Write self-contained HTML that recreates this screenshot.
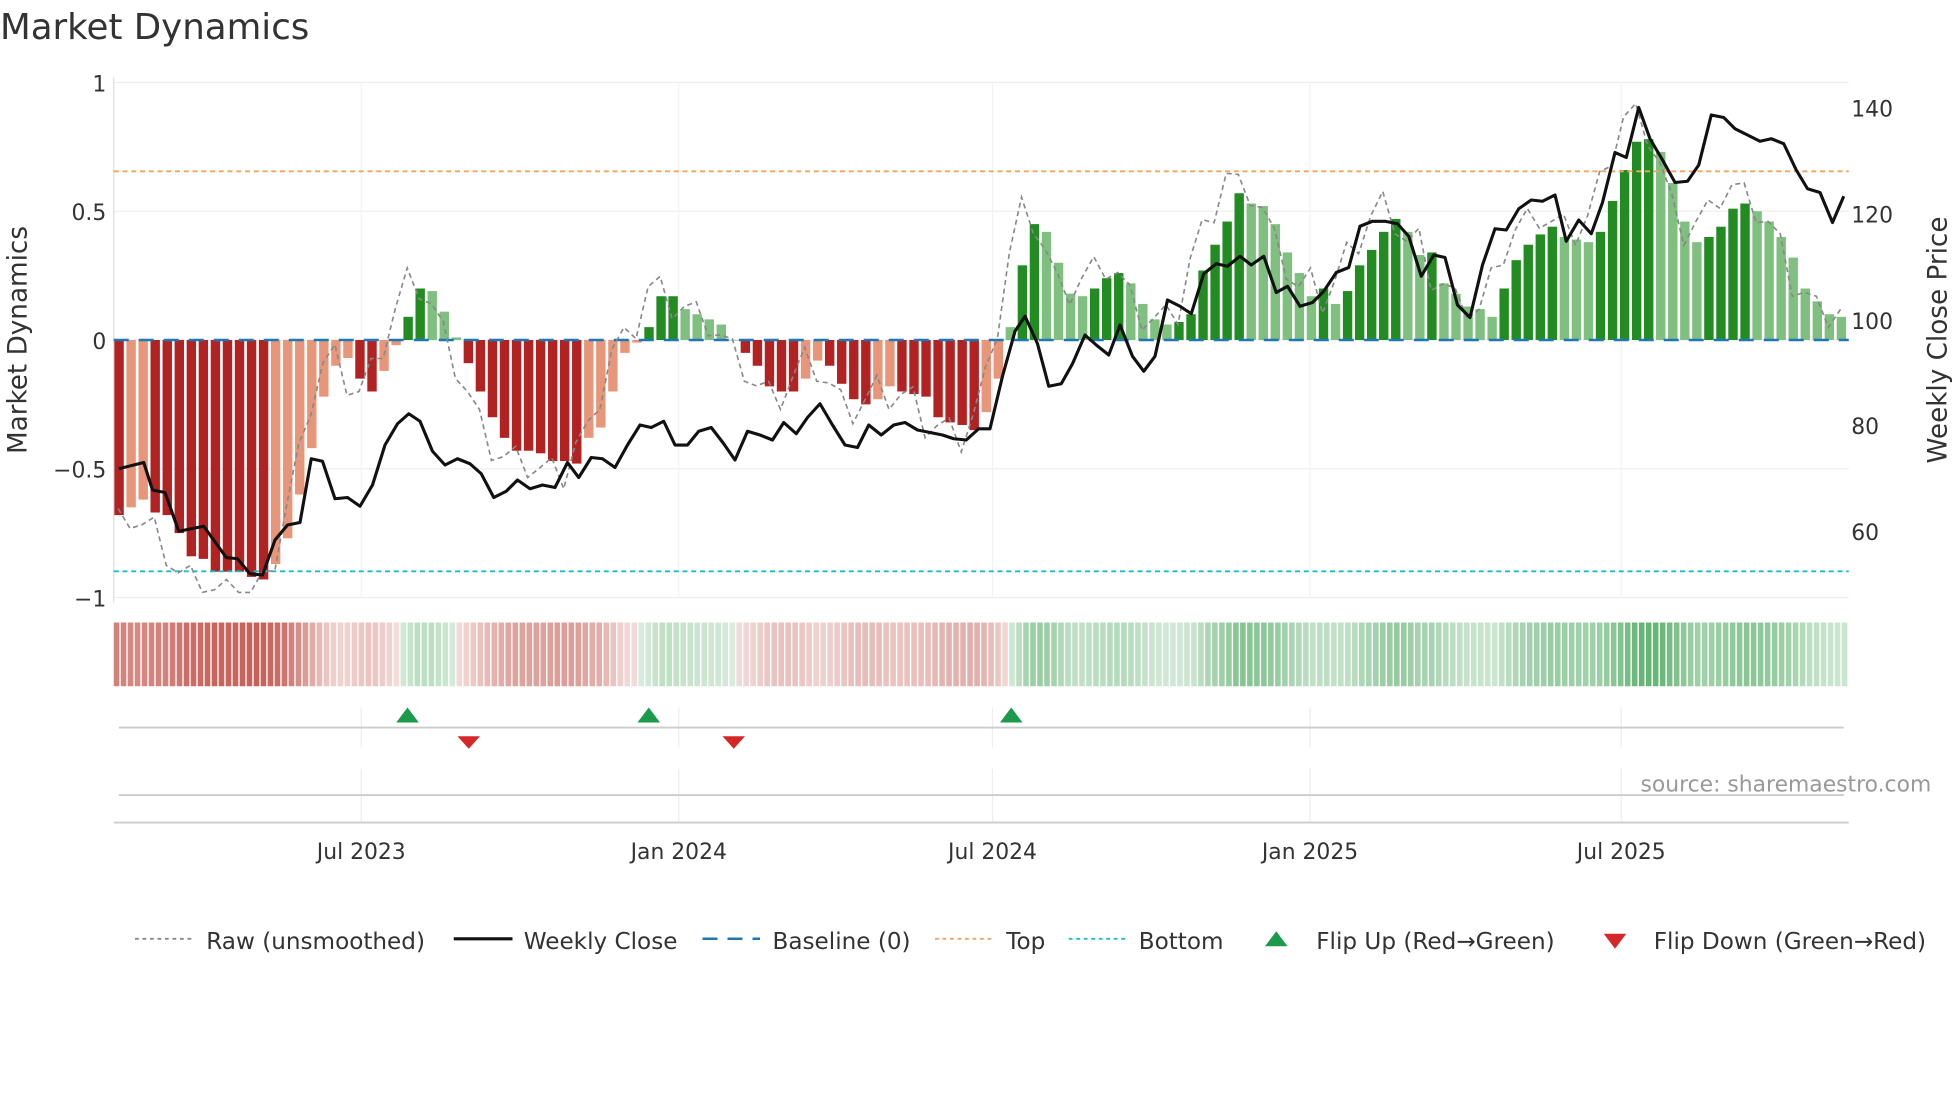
<!DOCTYPE html>
<html><head><meta charset="utf-8"><style>
html,body{margin:0;padding:0;background:#fff;}
svg{display:block;font-family:"DejaVu Sans","Liberation Sans",sans-serif;}
</style></head><body>
<svg id="s" width="1960" height="1102" viewBox="0 0 1568 881.6" xmlns="http://www.w3.org/2000/svg">
<rect width="1568" height="882" fill="#fff"/>
<text x="0" y="31" font-size="28.5" fill="#333">Market Dynamics</text>
<g id="grid"></g>
<g id="bars"></g>
<g id="heat"></g>
<g id="lines"></g>
<g font-size="17.5" fill="#333">
<text x="85" y="73" text-anchor="end">1</text>
<text x="85" y="176" text-anchor="end">0.5</text>
<text x="85" y="279" text-anchor="end">0</text>
<text x="85" y="382" text-anchor="end">−0.5</text>
<text x="85" y="485" text-anchor="end">−1</text>
<text x="1481" y="93">140</text>
<text x="1481" y="178">120</text>
<text x="1481" y="263">100</text>
<text x="1481" y="347">80</text>
<text x="1481" y="432">60</text>
<text x="289" y="687" text-anchor="middle">Jul 2023</text>
<text x="543" y="687" text-anchor="middle">Jan 2024</text>
<text x="794" y="687" text-anchor="middle">Jul 2024</text>
<text x="1048" y="687" text-anchor="middle">Jan 2025</text>
<text x="1297" y="687" text-anchor="middle">Jul 2025</text>
</g>
<text transform="translate(21,272) rotate(-90)" font-size="21" fill="#333" text-anchor="middle">Market Dynamics</text>
<text transform="translate(1557,272) rotate(-90)" font-size="21" fill="#333" text-anchor="middle">Weekly Close Price</text>
<text x="1545" y="633" font-size="17.5" fill="#999" text-anchor="end">source: sharemaestro.com</text>
<g font-size="18.5" fill="#333">
<line x1="108" y1="751" x2="154" y2="751" stroke="#888" stroke-width="1.5" stroke-dasharray="3,3"/>
<text x="165" y="759">Raw (unsmoothed)</text>
<line x1="363" y1="751" x2="410" y2="751" stroke="#111" stroke-width="2.5"/>
<text x="419" y="759">Weekly Close</text>
<line x1="562" y1="751" x2="608" y2="751" stroke="#1f77b4" stroke-width="2" stroke-dasharray="12,8"/>
<text x="618" y="759">Baseline (0)</text>
<line x1="748" y1="751" x2="794" y2="751" stroke="#f4a460" stroke-width="1.5" stroke-dasharray="3,3"/>
<text x="805" y="759">Top</text>
<line x1="855" y1="751" x2="901" y2="751" stroke="#17becf" stroke-width="1.5" stroke-dasharray="3,3"/>
<text x="911" y="759">Bottom</text>
<polygon points="1012,757 1021,745 1030,757" fill="#1a9a4a"/>
<text x="1053" y="759">Flip Up (Red→Green)</text>
<polygon points="1283,747 1292,759 1301,747" fill="#d62728"/>
<text x="1323" y="759">Flip Down (Green→Red)</text>
</g>
</svg>
<script>
var NS="http://www.w3.org/2000/svg";
function el(p,t,a){var e=document.createElementNS(NS,t);for(var k in a)e.setAttribute(k,a[k]);document.getElementById(p).appendChild(e);return e;}
var v=[-0.68,-0.65,-0.62,-0.67,-0.68,-0.75,-0.84,-0.85,-0.9,-0.9,-0.9,-0.92,-0.93,-0.87,-0.77,-0.6,-0.42,-0.22,-0.1,-0.07,-0.15,-0.2,-0.12,-0.02,0.09,0.2,0.19,0.11,0.01,-0.09,-0.2,-0.3,-0.38,-0.43,-0.43,-0.44,-0.47,-0.47,-0.48,-0.38,-0.34,-0.2,-0.05,-0.01,0.05,0.17,0.17,0.12,0.1,0.08,0.06,0.0,-0.05,-0.1,-0.18,-0.2,-0.2,-0.15,-0.08,-0.1,-0.17,-0.23,-0.25,-0.23,-0.18,-0.2,-0.21,-0.22,-0.3,-0.32,-0.33,-0.35,-0.28,-0.15,0.05,0.29,0.45,0.42,0.3,0.18,0.17,0.2,0.24,0.26,0.22,0.14,0.08,0.06,0.07,0.1,0.27,0.37,0.46,0.57,0.53,0.52,0.45,0.34,0.26,0.17,0.2,0.14,0.19,0.29,0.35,0.42,0.47,0.42,0.33,0.34,0.22,0.18,0.13,0.12,0.09,0.2,0.31,0.37,0.41,0.44,0.4,0.39,0.38,0.42,0.54,0.66,0.77,0.78,0.73,0.61,0.46,0.38,0.4,0.44,0.51,0.53,0.5,0.46,0.4,0.32,0.2,0.15,0.1,0.09];
var N=v.length,x0=91.5,dx=(1479-91.5)/N;
function Y(t){return 272-t*206;}
[66,169,272,375,478].forEach(function(y){el("grid","line",{x1:91,x2:1479,y1:y,y2:y,stroke:"#eee","stroke-width":1});});
[289,543,794,1048,1297].forEach(function(x){el("grid","line",{x1:x,x2:x,y1:66,y2:478,stroke:"#f2f2f2","stroke-width":1});el("grid","line",{x1:x,x2:x,y1:566,y2:598,stroke:"#eee","stroke-width":1});el("grid","line",{x1:x,x2:x,y1:615,y2:658,stroke:"#eee","stroke-width":1});});
el("grid","line",{x1:91,x2:91,y1:62,y2:482,stroke:"#ddd","stroke-width":1});
el("grid","line",{x1:95,x2:1475,y1:582,y2:582,stroke:"#ccc","stroke-width":1.5});
el("grid","line",{x1:95,x2:1475,y1:636,y2:636,stroke:"#ccc","stroke-width":1.5});
el("grid","line",{x1:91,x2:1479,y1:658,y2:658,stroke:"#ccc","stroke-width":1.5});
for(var i=0;i<N;i++){var a=v[i],p=i?v[i-1]:0;var dark=Math.abs(a)>=Math.abs(p)-0.005;
var c=a>=0?(dark?"#228b22":"#7fbf7f"):(dark?"#b22222":"#e8967a");
var y1=Y(Math.max(a,0)),y2=Y(Math.min(a,0));
el("bars","rect",{x:x0+i*dx,y:y1,width:dx*0.78,height:Math.max(y2-y1,0.5),fill:c});}
var M=248,hw=(1479-91)/M;
for(var j=0;j<M;j++){var f=j*(N-1)/(M-1),k=Math.floor(f),t=f-k;var a=v[k]*(1-t)+(k+1<N?v[k+1]:v[k])*t;
var al=0.2+Math.min(Math.abs(a),1)*0.75;var c=a>=0?"rgba(60,160,80,"+Math.min(1,al*1.0)+")":"rgba(190,70,60,"+al*0.95+")";
el("heat","rect",{x:91+j*hw,y:498,width:hw*0.8,height:51,fill:c});}
el("lines","line",{x1:91,x2:1479,y1:137,y2:137,stroke:"#f4a460","stroke-width":1.5,"stroke-dasharray":"4,3"});
el("lines","line",{x1:91,x2:1479,y1:457,y2:457,stroke:"#17becf","stroke-width":1.5,"stroke-dasharray":"4,3"});
el("lines","line",{x1:91,x2:1479,y1:272,y2:272,stroke:"#1f77b4","stroke-width":2,"stroke-dasharray":"12,8"});
var rp=[];for(var i=0;i<N;i++){var r=v[Math.min(i+1,N-1)]*1.1+(i%3==0?0.06:(i%3==1?-0.05:0.02));r=Math.max(-0.98,Math.min(0.95,r));rp.push((x0+i*dx+3).toFixed(1)+","+Y(r).toFixed(1));}
el("lines","polyline",{points:rp.join(" "),fill:"none",stroke:"#888","stroke-width":1.3,"stroke-dasharray":"4,3"});
var pr="95,375 115,370 122,392 132,394 143,425 163,421 181,446 190,447 200,459 210,460 220,432 230,420 240,418 249,367 258,369 268,399 278,398 288,405 298,388 308,356 318,339 327,331 336,337 346,361 356,372 366,367 376,371 385,379 395,398 405,393 414,384 424,391 434,388 444,390 454,370 463,382 473,366 482,367 492,374 502,356 512,340 521,342 531,337 540,356 550,356 559,345 569,342 579,355 588,368 598,345 608,348 618,352 627,338 637,347 646,334 656,323 666,340 676,356 686,358 695,340 705,348 715,340 724,338 734,344 744,346 754,348 763,351 773,352 783,343 792,343 802,301 812,265 820,253 830,275 839,309 849,307 858,291 868,268 877,276 887,284 896,260 906,285 915,297 924,285 934,240 944,245 953,251 963,219 973,211 982,213 992,205 1001,212 1011,205 1021,234 1030,229 1040,245 1050,242 1059,233 1069,218 1079,214 1088,181 1098,177 1108,177 1118,179 1127,189 1137,221 1147,204 1156,206 1166,244 1176,254 1186,212 1196,183 1205,184 1215,167 1225,160 1234,161 1244,156 1253,193 1263,176 1273,187 1282,162 1292,122 1301,126 1311,86 1320,111 1330,128 1340,146 1350,145 1359,132 1369,92 1379,94 1388,103 1398,108 1408,113 1417,111 1427,115 1437,136 1446,151 1456,154 1466,178 1475,157";
el("lines","polyline",{points:pr,fill:"none",stroke:"#111","stroke-width":2.5,"stroke-linejoin":"round"});
[326,519,809].forEach(function(x){el("lines","polygon",{points:(x-9)+",578 "+x+",566 "+(x+9)+",578",fill:"#1a9a4a"});});
[375,587].forEach(function(x){el("lines","polygon",{points:(x-9)+",589 "+x+",599 "+(x+9)+",589",fill:"#d62728"});});
</script>
</body></html>
